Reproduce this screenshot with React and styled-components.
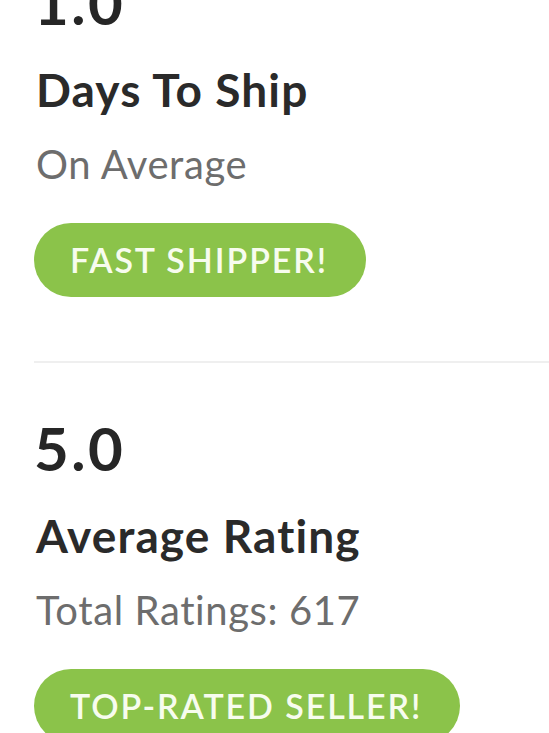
import React from 'react';
import styled, { createGlobalStyle } from 'styled-components';

const GlobalStyle = createGlobalStyle`
  html, body {
    margin: 0;
    padding: 0;
    background: #ffffff;
    overflow: hidden;
  }
  body {
    font-family: Lato, "Open Sans", "Liberation Sans", sans-serif;
    -webkit-font-smoothing: antialiased;
  }
`;

const Page = styled.div`
  margin-top: -34px;
  padding-left: 34px;
`;

const Stat = styled.section`
  display: flex;
  flex-direction: column;
  align-items: flex-start;
  padding-top: ${p => p.$first ? '0' : '49px'};
  padding-left: 2px;
`;

const Value = styled.div`
  font-size: 60px;
  line-height: 72px;
  font-weight: 700;
  letter-spacing: 2.5px;
  margin-left: -2px;
  color: #262626;
`;

const Title = styled.h2`
  margin: 24px 0 0;
  font-size: 46px;
  line-height: 56px;
  font-weight: 700;
  letter-spacing: 1.1px;
  color: #2a2a2a;
`;

const Subtitle = styled.p`
  margin: 22px 0 0;
  font-size: 40px;
  line-height: 48px;
  font-weight: 400;
  letter-spacing: 0.6px;
  color: #6d6d6d;
`;

const Badge = styled.div`
  margin: 35px 0 0 -2px;
  height: 74px;
  display: flex;
  align-items: center;
  padding: 0 38px 2px 36px;
  box-sizing: border-box;
  border-radius: 37px;
  background: #8bc34a;
  color: #f7fcee;
  font-size: 34px;
  font-weight: 600;
  letter-spacing: 1.9px;
`;

const Divider = styled.hr`
  margin: 64px 0 0;
  border: none;
  height: 2px;
  background: #efefef;
`;

const stats = [
  { value: '1.0', title: 'Days To Ship', subtitle: 'On Average', badge: 'FAST SHIPPER!' },
  { value: '5.0', title: 'Average Rating', subtitle: 'Total Ratings: 617', badge: 'TOP-RATED SELLER!' },
];

export default function App() {
  return (
    <>
      <GlobalStyle />
      <Page>
        {stats.map((s, i) => (
          <React.Fragment key={s.title}>
            {i > 0 && <Divider />}
            <Stat $first={i === 0}>
              <Value>{s.value}</Value>
              <Title>{s.title}</Title>
              <Subtitle>{s.subtitle}</Subtitle>
              <Badge>{s.badge}</Badge>
            </Stat>
          </React.Fragment>
        ))}
      </Page>
    </>
  );
}
